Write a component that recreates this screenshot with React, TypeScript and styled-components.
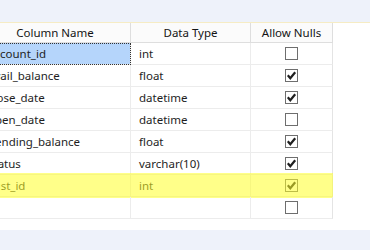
import React from "react";
import styled, {createGlobalStyle} from "styled-components";

const GlobalStyle = createGlobalStyle`
  html, body {
    margin: 0;
    padding: 0;
    background: #ffffff;
    overflow: hidden;
  }
  body {
    font-family: "Noto Sans", "Open Sans", sans-serif;
  }
`;

type Column = {
  name: string;
  type: string;
  nulls: boolean;
  selected?: boolean;
  highlight?: boolean;
};

const columns: Column[] = [
  {name: "account_id", type: "int", nulls: false, selected: true},
  {name: "avail_balance", type: "float", nulls: true},
  {name: "close_date", type: "datetime", nulls: true},
  {name: "open_date", type: "datetime", nulls: false},
  {name: "pending_balance", type: "float", nulls: true},
  {name: "status", type: "varchar(10)", nulls: true},
  {name: "cust_id", type: "int", nulls: true, highlight: true},
  {name: "", type: "", nulls: false},
];

const Check = ({checked}: {checked: boolean}) => (
  <BoxSC>
    {checked && (
      <svg width="11" height="11" viewBox="0 0 11 11">
        <path d="M1.8 5.2 L4.3 8.2 L9.2 2.2" fill="none" stroke="#1f1f1f" strokeWidth="2.2" />
      </svg>
    )}
  </BoxSC>
);

const App = () => {
  return (
    <PageSC>
      <GlobalStyle/>
      <TopBandSC/>
      <BodySC>
        <TableSC>
          <HeadRowSC>
            <HeadCellSC>Column Name</HeadCellSC>
            <HeadCellSC>Data Type</HeadCellSC>
            <HeadCellSC>Allow Nulls</HeadCellSC>
          </HeadRowSC>
          {columns.map((c, i) => (
            <RowSC key={i}>
              <CellSC $selected={c.selected}>{c.name}</CellSC>
              <CellSC>{c.type}</CellSC>
              <CheckCellSC><Check checked={c.nulls}/></CheckCellSC>
              {c.highlight && <HighlightSC/>}
            </RowSC>
          ))}
        </TableSC>
      </BodySC>
      <BottomBandSC/>
    </PageSC>
  );
};

const PageSC = styled("div")`
  width: 370px;
  height: 250px;
  display: flex;
  flex-direction: column;
`;

const TopBandSC = styled("div")`
  height: 22px;
  background: #eef2fa;
  border-bottom: 1px solid #f6ecc4;
`;

const BodySC = styled("div")`
  flex: 1;
  background: #ffffff;
`;

const BottomBandSC = styled("div")`
  height: 20px;
  background: #eef2fa;
`;

const TableSC = styled("div")`
  margin-left: -20px;
  width: 353px;
  font-size: 11.5px;
  color: #1e1e1e;
`;

const HeadRowSC = styled("div")`
  display: grid;
  grid-template-columns: 151px 120px 82px;
  height: 20px;
`;

const HeadCellSC = styled("div")`
  display: flex;
  align-items: center;
  justify-content: center;
  border-right: 1px solid #dedede;
  border-bottom: 1px solid #dedede;
  background: #fbfbfb;
  color: #141414;
`;

const RowSC = styled("div")`
  position: relative;
  display: grid;
  grid-template-columns: 151px 120px 82px;
  height: 22px;
`;

const CellSC = styled("div")<{ $selected?: boolean }>`
  display: flex;
  align-items: center;
  padding-left: 8px;
  border-right: 1px solid #ececec;
  border-bottom: 1px solid #ececec;
  white-space: nowrap;
  overflow: hidden;
  background: ${p => p.$selected ? "#b5d5fb" : "transparent"};
  outline: ${p => p.$selected ? "1px dotted #333" : "none"};
  outline-offset: -1px;
`;

const CheckCellSC = styled(CellSC)`
  justify-content: center;
  padding-left: 0;
  border-right: 1px solid #e4e4e4;
`;

const BoxSC = styled("div")`
  width: 13px;
  height: 13px;
  box-sizing: border-box;
  border: 1px solid #6e6e6e;
  background: #ffffff;
  display: flex;
  align-items: center;
  justify-content: center;
`;

const HighlightSC = styled("div")`
  position: absolute;
  left: 0;
  right: 0;
  top: -2px;
  bottom: -1px;
  background: rgba(255, 255, 40, 0.55);
  pointer-events: none;
`;

export default App;
